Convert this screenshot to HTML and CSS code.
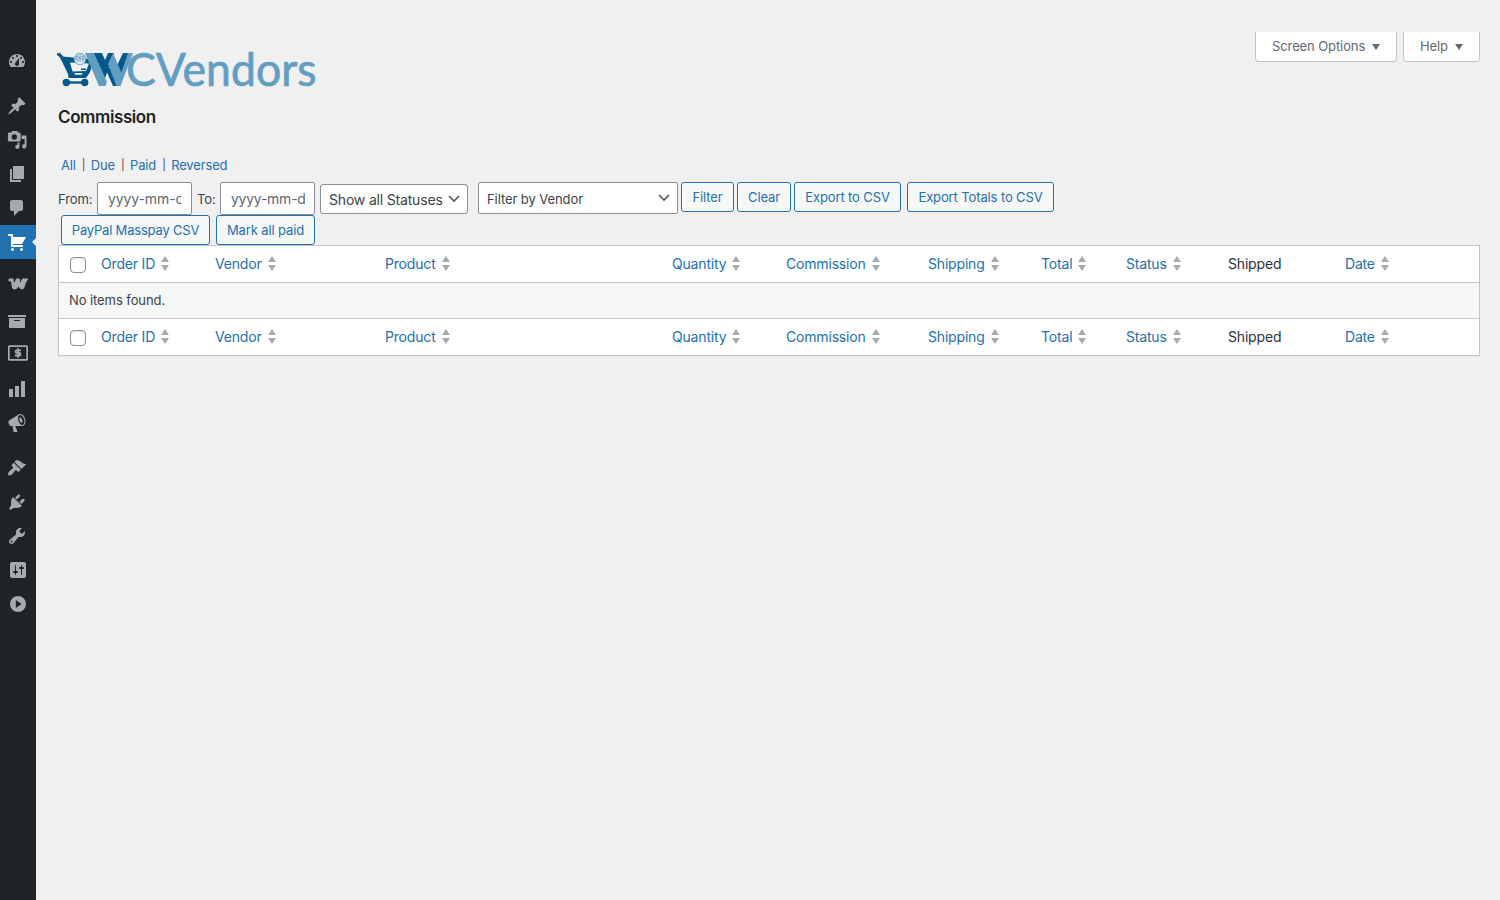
FILE: index.html
```html
<!DOCTYPE html>
<html lang="en">
<head>
    <meta charset="UTF-8">
    <meta name="viewport" content="width=device-width, initial-scale=1.0">
    <title>Commission</title>
    <link rel="stylesheet" href="styles.css">
</head>
<body>
    <!-- Admin menu -->
    <nav class="menu">
        <a class="menu-item"><svg viewBox="0 0 20 20"><path d="M3.76 16h12.48c1.1-1.37 1.76-3.11 1.76-5 0-4.42-3.58-8-8-8s-8 3.58-8 8c0 1.89.66 3.63 1.76 5zM10 4c.55 0 1 .45 1 1s-.45 1-1 1-1-.45-1-1 .45-1 1-1zM6 6c.55 0 1 .45 1 1s-.45 1-1 1-1-.45-1-1 .45-1 1-1zm8 0c.55 0 1 .45 1 1s-.45 1-1 1-1-.45-1-1 .45-1 1-1zm-5.370 5.550L12 7v6c0 1.100-.9 2-2 2s-2-.9-2-2c0-.57.240-1.080.630-1.450zM4 10c.55 0 1 .45 1 1s-.45 1-1 1-1-.45-1-1 .45-1 1-1zm12 0c.55 0 1 .45 1 1s-.45 1-1 1-1-.45-1-1 .45-1 1-1z"/></svg></a>
        <a class="menu-item after-gap"><svg viewBox="0 0 20 20"><path d="M10.440 3.020l1.820-1.820 6.360 6.350-1.830 1.820c-1.050-.68-2.480-.57-3.410.36l-.75.750c-.92.930-1.040 2.350-.35 3.410l-1.830 1.820-2.410-2.410-2.800 2.790c-.42.420-3.380 2.710-3.800 2.290s1.860-3.390 2.280-3.810l2.790-2.790L4.100 9.360l1.830-1.820c1.050.690 2.480.570 3.400-.36l.75-.75c.93-.92 1.050-2.350.360-3.410z"/></svg></a>
        <a class="menu-item"><svg viewBox="0 0 20 20"><path fill-rule="evenodd" d="M12 2.500h-1L10.300.9H5.200L4.500 2.500h-2C1.500 2.500.9 3 .9 4v6c0 1 .6 1.600 1.600 1.600H12c1 0 1.600-.6 1.600-1.600V4c0-1-.6-1.500-1.600-1.500zM7.300 4.300a2.700 2.700 0 110 5.400 2.700 2.700 0 010-5.400z"/><path d="M14.500 5.500H19.500v10.300c0 1.600-.9 2.700-2.300 2.700a2.100 2.100 0 010-4.200h.4V9H14.500zM12.500 12.500v4c0 1.500-.9 2.400-2.200 2.400a2.100 2.100 0 110-4.200h.3v-2.200z"/></svg></a>
        <a class="menu-item"><svg viewBox="0 0 20 20"><path d="M6 15V2h11v13H6zm-1 1h9v2H3V5h2v11z"/></svg></a>
        <a class="menu-item"><svg viewBox="0 0 20 20"><path d="M5 2h9c1.100 0 2 .9 2 2v7c0 1.100-.9 2-2 2h-2l-5 5v-5H5c-1.100 0-2-.9-2-2V4c0-1.100.9-2 2-2z"/></svg></a>
        <a class="menu-item current"><svg viewBox="0 0 20 20"><path d="M6 13h9c.55 0 1 .45 1 1s-.45 1-1 1H5c-.55 0-1-.45-1-1V4H2c-.55 0-1-.45-1-1s.45-1 1-1h3c.55 0 1 .45 1 1v2h13l-4 7H6v1zm-.5 3c.83 0 1.500.67 1.500 1.500S6.330 19 5.500 19 4 18.330 4 17.500 4.670 16 5.500 16zm9 0c.83 0 1.500.67 1.500 1.500s-.67 1.500-1.500 1.500-1.500-.67-1.500-1.500.67-1.500 1.500-1.500z"/></svg></a>
        <a class="menu-item woo"><svg viewBox="0 0 20 20"><path d="M1.500 4.400h3.900l.5 4.600 2.500-4.600h3.300l.4 4.600c.6-1.900 1.400-3.400 2.300-4.600h5.100c.6 0 .8.700.4 1.200-1.800 2.500-2.700 5-3.400 7.700-.5 2.200-2.900 2.700-4.400 1.200l-1.600-1.700-1.600 1.700c-1.600 1.600-4.500 1.200-5-1.200L3 7.400H1.500C.1 7.400.1 4.400 1.500 4.400z"/></svg></a>
        <a class="menu-item products"><svg viewBox="0 0 20 20"><path d="M19 4v2H1V4h18zM2 7h16v10H2V7zm11 3V9H7v1h6z"/></svg></a>
        <a class="menu-item payments"><svg viewBox="0 0 20 20"><path fill-rule="evenodd" d="M1.500 2.200h17a1.500 1.500 0 011.500 1.500v12.600a1.500 1.500 0 01-1.500 1.500h-17A1.500 1.500 0 010 16.300V3.700a1.500 1.500 0 011.500-1.500zM1.700 4v12h16.600V4z"/><path class="line" d="M13 7.300H8.800a1.300 1.300 0 000 2.600h2.400a1.300 1.300 0 010 2.600H7M10 5.200v9.500"/></svg></a>
        <a class="menu-item analytics"><svg viewBox="0 0 20 20"><path d="M18 18V2h-4v16h4zm-6 0V7H8v11h4zm-6 0v-8H2v8h4z"/></svg></a>
        <a class="menu-item"><svg viewBox="0 0 20 20"><path fill-rule="evenodd" d="M18.150 5.940c.46 1.620.38 3.220-.02 4.480-.42 1.280-1.260 2.180-2.300 2.480-.16.060-.26.060-.4.060-.06.020-.12.020-.18.020-.06.020-.14.020-.22.020h-6.800l2.220 5.500c.02.140-.06.260-.14.340-.08.100-.24.160-.34.160H6.950c-.1 0-.26-.06-.34-.16-.08-.08-.16-.2-.14-.34l-1-5.500H4.250l-.02-.02c-.5.060-1.080-.18-1.540-.62s-.88-1.080-1.060-1.880c-.24-.8-.2-1.560-.02-2.200.18-.62.580-1.080 1.060-1.300l.02-.02 9-5.400c.1-.06.180-.1.240-.16.060-.04.140-.08.240-.12.160-.08.280-.12.500-.18 1.040-.3 2.240.100 3.220.980s1.840 2.240 2.260 3.860zm-2.580 5.980h-.02c.4-.1.740-.34 1.040-.7.580-.7.860-1.760.860-3.040 0-.64-.1-1.300-.28-1.980-.34-1.360-1.020-2.500-1.780-3.240s-1.680-1.100-2.460-.88c-.82.220-1.400.960-1.700 2-.32 1.040-.28 2.360.06 3.720.38 1.360 1 2.500 1.800 3.240.78.740 1.620 1.100 2.480.88zm-2.540-7.460c.58-.16 1.300.24 1.820 1.180.52.960.8 2.200.6 3.160-.12.500-.36.800-.66.880-.6.160-1.300-.24-1.820-1.180-.52-.96-.8-2.200-.6-3.160.12-.5.360-.8.660-.88z"/></svg></a>
        <a class="menu-item after-gap"><svg viewBox="0 0 20 20"><path d="M14.480 11.060L7.410 3.990l1.500-1.500c.5-.56 2.300-.47 3.510.320 1.210.8 1.430 1.280 2.910 2.100 1.180.640 2.450 1.260 4.450.850zm-.71.710L6.700 4.700 4.930 6.470c-.39.390-.39 1.020 0 1.410l1.060 1.060c.39.390.39 1.030 0 1.420-.6.600-1.430 1.110-2.210 1.690-.35.260-.7.530-1.010.840C1.430 14.230.4 16.080 1.400 17.070c.99 1 2.840-.03 4.180-1.360.31-.31.580-.66.850-1.020.57-.78 1.080-1.610 1.690-2.210.39-.39 1.020-.39 1.410 0l1.060 1.060c.39.390 1.020.390 1.410 0z"/></svg></a>
        <a class="menu-item"><svg viewBox="0 0 20 20"><path d="M13.110 4.360L9.870 7.600 8 5.730l3.240-3.240c.35-.34 1.050-.2 1.560.320.520.510.660 1.210.310 1.550zm-8 1.770l.91-1.120 9.010 9.010-1.190.840c-.71.710-2.630 1.160-3.820 1.160H6.140L4.900 17.260c-.59.590-1.540.590-2.120 0-.59-.58-.59-1.530 0-2.120l1.240-1.240v-3.880c0-1.130.4-3.190 1.090-3.890zm7.260 3.970l3.240-3.240c.34-.35 1.040-.21 1.550.310.520.510.660 1.210.310 1.550l-3.240 3.250z"/></svg></a>
        <a class="menu-item"><svg viewBox="0 0 20 20"><path d="M16.680 9.770c-1.340 1.340-3.300 1.670-4.950.990l-5.410 6.520c-.99.990-2.590.990-3.580 0s-.99-2.590 0-3.570l6.520-5.420c-.68-1.650-.35-3.610.990-4.950 1.280-1.280 3.120-1.620 4.720-1.060l-2.890 2.890 2.820 2.820 2.860-2.870c.53 1.580.18 3.390-1.080 4.650zM3.810 16.210c.4.390 1.040.390 1.430 0 .4-.4.400-1.040 0-1.430-.39-.4-1.030-.4-1.430 0-.39.390-.39 1.030 0 1.430z"/></svg></a>
        <a class="menu-item wide"><svg viewBox="0 0 20 20"><path d="M18 16V4c0-1.100-.9-2-2-2H4c-1.100 0-2 .9-2 2v12c0 1.100.9 2 2 2h12c1.100 0 2-.9 2-2zM8 11h1c.55 0 1 .45 1 1s-.45 1-1 1H8v1.500c0 .280-.22.500-.5.500s-.5-.22-.5-.5V13H6c-.55 0-1-.45-1-1s.45-1 1-1h1V5.500c0-.28.220-.5.500-.5s.5.220.5.500V11zm5-2h-1c-.55 0-1-.45-1-1s.45-1 1-1h1V5.500c0-.28.220-.5.500-.5s.5.220.5.500V7h1c.55 0 1 .45 1 1s-.45 1-1 1h-1v5.500c0 .280-.22.500-.5.500s-.5-.22-.5-.5V9z"/></svg></a>
        <a class="menu-item wide"><svg viewBox="0 0 20 20"><path fill-rule="evenodd" d="M10 2a8 8 0 110 16 8 8 0 010-16zM7.800 6v8L13.500 10z"/></svg></a>
    </nav>

    <main class="content">
        <header class="top">
            <svg class="logo" viewBox="0 -10 270 62">
                <!-- cart -->
                <path class="dark" d="M3 4.500L8 8.500L41 11.500L35.500 25L32 30H14.500L14 26L6 9.500L3 7z"/>
                <path class="dark handle" d="M4.500 5.500l4 4"/>
                <path class="cart-hole" d="M16 14.500l19 1-3 7.500-13.500.5zM20.500 25h8l-.5 1.800h-7z"/>
                <path class="dark" d="M27 20.500h5v1.500h-5z"/>
                <circle class="globe" cx="26" cy="11" r="5.800"/>
                <path class="globe line-only" d="M20 11h12M26 5v9M21 8q5 3 10 0M23.500 6q-2 4 0 8M28.500 6q2 4 0 8"/>
                <path class="dark" d="M12 33.300h19v2.400H12z"/>
                <circle class="dark" cx="12.300" cy="34.500" r="3.700"/>
                <circle class="dark" cx="30.700" cy="34.500" r="3.700"/>
                <!-- folded W -->
                <path class="dark" d="M39 5h9l6 14-6 17-10-22zM54 5h6L50 33l-4-9z"/>
                <path class="light" d="M31 5h9l13 29-1.500 4H45z"/>
                <path class="dark" d="M51 20h7l8 18h-7zM69 5h6L63 37l-5-9z"/>
                <path class="light" d="M54 16l5-11 9.500 22L65 38h-2.500zM74 5h5L66.500 38H63z"/>
                <text x="72" y="38" textLength="190.500" lengthAdjust="spacingAndGlyphs">CVendors</text>
            </svg>
            <div class="screen-links">
                <button class="screen-btn">Screen Options <i class="caret"></i></button>
                <button class="screen-btn">Help <i class="caret"></i></button>
            </div>
        </header>

        <h1>Commission</h1>

        <div class="views"><a>All</a><span>|</span><a>Due</a><span>|</span><a>Paid</a><span>|</span><a>Reversed</a></div>

        <!-- Filters -->
        <div class="filters">
            <label>From:</label>
            <input class="date" type="text" placeholder="yyyy-mm-dd">
            <label class="to">To:</label>
            <input class="date date-to" type="text" placeholder="yyyy-mm-dd">
            <div class="select statuses">Show all Statuses<svg viewBox="0 0 12 8"><path d="M1 1l5 5 5-5"/></svg></div>
            <div class="select vendor">Filter by Vendor<svg viewBox="0 0 12 8"><path d="M1 1l5 5 5-5"/></svg></div>
            <button class="button filter">Filter</button>
            <button class="button clear">Clear</button>
            <button class="button export">Export to CSV</button>
            <button class="button totals">Export Totals to CSV</button>
        </div>
        <div class="actions">
            <button class="button masspay">PayPal Masspay CSV</button>
            <button class="button mark">Mark all paid</button>
        </div>

        <!-- Commission table -->
        <div class="table">
            <div class="row">
                <span><input type="checkbox"></span>
                <a>Order ID<i class="sort"></i></a>
                <a>Vendor<i class="sort"></i></a>
                <a>Product<i class="sort"></i></a>
                <a>Quantity<i class="sort"></i></a>
                <a>Commission<i class="sort"></i></a>
                <a>Shipping<i class="sort"></i></a>
                <a>Total<i class="sort"></i></a>
                <a>Status<i class="sort"></i></a>
                <span>Shipped</span>
                <a>Date<i class="sort"></i></a>
            </div>
            <div class="empty">No items found.</div>
            <div class="row">
                <span><input type="checkbox"></span>
                <a>Order ID<i class="sort"></i></a>
                <a>Vendor<i class="sort"></i></a>
                <a>Product<i class="sort"></i></a>
                <a>Quantity<i class="sort"></i></a>
                <a>Commission<i class="sort"></i></a>
                <a>Shipping<i class="sort"></i></a>
                <a>Total<i class="sort"></i></a>
                <a>Status<i class="sort"></i></a>
                <span>Shipped</span>
                <a>Date<i class="sort"></i></a>
            </div>
        </div>
    </main>
</body>
</html>
```
FILE: styles.css
```css
* {
    box-sizing: border-box;
}
body {
    display: flex;
    margin: 0;
    height: 900px;
    background: #f0f0f0;
    color: #3c434a;
    font-family: Inter, "Liberation Sans", sans-serif;
    font-size: 13px;
    letter-spacing: -0.08px;
}
a {
    color: #2271b1;
}

/* Admin menu */
.menu {
    width: 36px;
    flex: none;
    padding-top: 44px;
    background: #1d2327;
}
.menu-item {
    display: flex;
    position: relative;
    align-items: center;
    justify-content: center;
    height: 34px;
    padding-right: 2px;
}
.menu-item svg {
    width: 20px;
    height: 20px;
    fill: #a7aaad;
}
.after-gap {
    margin-top: 11px;
}
.current {
    background: #2271b1;
}
.menu .current svg {
    fill: #fff;
}
.current::after {
    content: "";
    position: absolute;
    right: 0;
    top: 13px;
    border: 4px solid transparent;
    border-left: 0;
    border-right-color: #f0f0f0;
}
.woo {
    margin-top: 8px;
    padding-right: 0;
}
.products {
    margin-top: 3px;
}
.payments {
    height: 32px;
    padding: 0 0 2px;
}
.analytics {
    margin-top: 2px;
}
.wide {
    padding-right: 0;
}
.line {
    fill: none;
    stroke: #a7aaad;
    stroke-width: 1.8;
}

/* Header */
.content {
    flex: 1;
    padding: 32px 20px 0 22px;
}
.top {
    display: flex;
    justify-content: space-between;
    height: 60px;
}
.logo {
    width: 270px;
    height: 62px;
    margin: 6px 0 0 -4px;
}
.logo text {
    font: 46px Lato, sans-serif;
    letter-spacing: 0;
    fill: #629dc2;
    stroke: #629dc2;
    stroke-width: 0.7;
}
.dark {
    fill: #04598a;
}
.light {
    fill: #629dc2;
}
.handle {
    stroke: #04598a;
    stroke-width: 2.5;
}
.cart-hole {
    fill: #f0f0f0;
}
.globe {
    fill: #dbe7ef;
    stroke: #629dc2;
    stroke-width: 0.8;
}
.line-only {
    fill: none;
}
.screen-links {
    display: flex;
    gap: 6px;
}
.screen-btn {
    display: flex;
    align-items: center;
    justify-content: space-between;
    width: 142px;
    height: 30px;
    padding: 0 16px 1px;
    border: 1px solid #c3c4c7;
    border-top: 0;
    border-radius: 0 0 4px 4px;
    background: #fff;
    color: #646970;
    font: inherit;
    letter-spacing: -0.1px;
}
.screen-btn:last-child {
    width: 77px;
}
.caret {
    margin-top: 2px;
    border: 4px solid transparent;
    border-top: 6px solid #646970;
    border-bottom: 0;
}
h1 {
    margin: 13px 0 0;
    color: #1d2327;
    font-size: 17px;
    font-weight: 600;
    line-height: 24px;
    letter-spacing: -0.4px;
}
.views {
    display: flex;
    gap: 6px;
    margin-top: 26px;
    padding-left: 3px;
    line-height: 20px;
    letter-spacing: -0.15px;
}
.views span {
    width: 3px;
    font-size: 11px;
    text-align: center;
}

/* Filters */
.filters {
    display: flex;
    height: 33px;
    margin-top: 7px;
}
.filters label {
    width: 39px;
    padding-top: 9px;
    line-height: 16px;
}
.filters .to {
    width: 23px;
    margin-left: 5px;
}
.date {
    width: 95px;
    height: 33px;
    padding: 0 10px;
    border: 1px solid #8c8f94;
    border-radius: 2px;
    font: 14px Inter, sans-serif;
    letter-spacing: -0.1px;
}
.date-to {
    padding-right: 9px;
    letter-spacing: -0.25px;
}
.date::placeholder {
    color: #646970;
}
.select {
    display: flex;
    align-items: center;
    justify-content: space-between;
    border: 1px solid #8c8f94;
    background: #fff;
}
.select svg {
    width: 12px;
    height: 8px;
    fill: none;
    stroke: #50575e;
    stroke-width: 1.6;
}
.statuses {
    width: 148px;
    height: 30px;
    margin: 2px 0 0 5px;
    padding: 0 7px 0 8px;
    border-radius: 3px;
    font-size: 14px;
    letter-spacing: -0.18px;
}
.vendor {
    width: 200px;
    height: 32px;
    margin-left: 10px;
    padding: 2px 7px 0 8px;
    border-radius: 2px;
}
.vendor svg {
    margin-top: -3px;
}
.button {
    height: 30px;
    padding: 0;
    border: 1px solid #2271b1;
    border-radius: 3px;
    background: #f6f7f7;
    color: #2271b1;
    font: inherit;
    letter-spacing: -0.12px;
    white-space: nowrap;
}
.filter {
    width: 53px;
    margin-left: 3px;
}
.clear {
    width: 54px;
    margin-left: 3px;
}
.export {
    width: 107px;
    margin-left: 3px;
}
.totals {
    width: 147px;
    margin-left: 6px;
}
.actions {
    display: flex;
    gap: 6px;
    padding-left: 3px;
}
.masspay {
    width: 149px;
    letter-spacing: -0.2px;
}
.mark {
    width: 99px;
}

/* Table */
.table {
    border: 1px solid #c3c4c7;
    background: #fff;
    box-shadow: 0 1px 1px rgba(0, 0, 0, 0.04);
}
.row {
    display: grid;
    grid-template-columns: 32px 114px 170px 287px 114px 142px 113px 85px 102px 117px 144px;
    height: 36px;
    color: #2c3338;
    font-size: 14px;
    letter-spacing: -0.18px;
}
.row > * {
    display: flex;
    align-items: center;
    padding: 0 0 1px 10px;
}
.row input {
    appearance: none;
    width: 16px;
    height: 16px;
    margin: 3px 0 0 1px;
    flex: none;
    border: 1px solid #8c8f94;
    border-radius: 4px;
    background: #fff;
    box-shadow: inset 0 1px 2px rgba(0, 0, 0, 0.1);
}
.empty {
    height: 37px;
    padding-left: 10px;
    border: solid #c3c4c7;
    border-width: 1px 0;
    background: #f6f7f7;
    line-height: 35px;
}
.sort {
    display: flex;
    flex-direction: column;
    gap: 3px;
    margin-left: 6px;
}
.sort::before,
.sort::after {
    content: "";
    border: 4px solid transparent;
}
.sort::before {
    border-top: 0;
    border-bottom: 6px solid #a7aaad;
}
.sort::after {
    border-bottom: 0;
    border-top: 6px solid #a7aaad;
}
```
